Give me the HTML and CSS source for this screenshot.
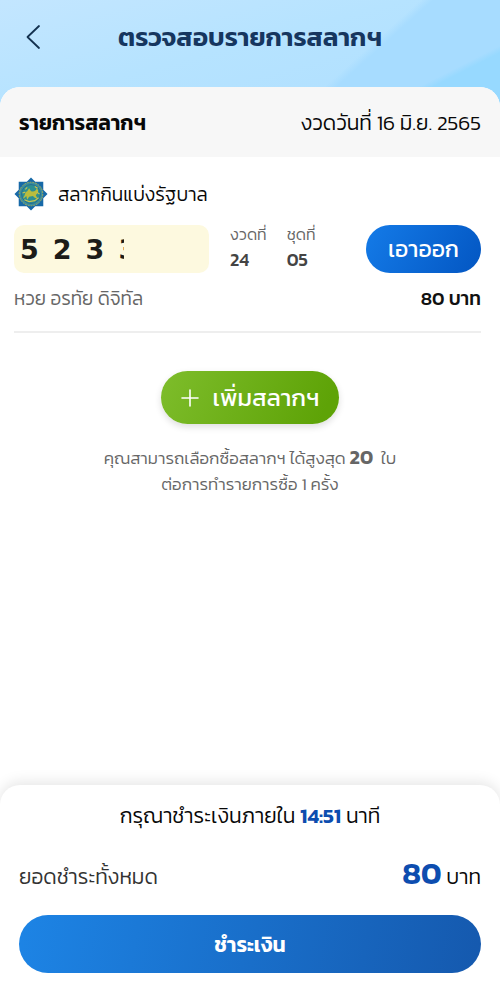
FILE: index.html
```html
<!DOCTYPE html>
<html lang="th">
<head>
<meta charset="utf-8">
<meta name="viewport" content="width=device-width, initial-scale=1">
<title>ตรวจสอบรายการสลากฯ</title>
<link rel="stylesheet" href="styles.css">
</head>
<body>
<div class="page">
  <header class="topbar">
    <button class="back" type="button" aria-label="ย้อนกลับ">
      <svg viewBox="0 0 16 26" width="16" height="26"><path d="M14 2 2.500 13 14 24" fill="none" stroke="currentColor" stroke-width="1.800" stroke-linecap="round" stroke-linejoin="round"/></svg>
    </button>
    <h1 class="title">ตรวจสอบรายการสลากฯ</h1>
  </header>
  <main class="sheet">
    <div class="sheet-head">
      <h2 class="sheet-title">รายการสลากฯ</h2>
      <span class="draw-date">งวดวันที่ 16 มิ.ย. 2565</span>
    </div>
    <article class="ticket">
      <div class="brand">
        <svg class="emblem" viewBox="0 0 36 36" width="34" height="34" aria-hidden="true">
          <path d="M18 .5 22.500 5H31v8.500l4.500 4.500-4.500 4.500V31h-8.500L18 35.500 13.500 31H5v-8.500L.5 18 5 13.500V5h8.500z" fill="#1769a8"/>
          <circle cx="18" cy="18" r="12.500" fill="#3d8f9b" stroke="#a9ab55" stroke-width="1" stroke-dasharray="2 1"/>
          <circle cx="18" cy="18" r="10" fill="#2c8f92" stroke="#236a94" stroke-width="1"/>
          <path d="M10 21c2-1 1-5 4-6l2-3 2 3c3 1 5 0 6-3 3 3 1 6-1 7l2 4-3-1-2-2-4 1-2 3-1-4-3 3z" fill="#b9bd3e"/>
          <path d="M12 13l2-2M22 10l3 2M11 24l5 2 6-1 4-3M9 17l3-1M24 16l3 2" fill="none" stroke="#c8c250" stroke-width="1.200"/>
        </svg>
        <span class="brand-name">สลากกินแบ่งรัฐบาล</span>
      </div>
      <div class="ticket-row">
        <div class="digits"><span>5</span><span>2</span><span>3</span><span class="cut">3</span></div>
        <dl class="facts">
          <div><dt>งวดที่</dt><dd>24</dd></div>
          <div><dt>ชุดที่</dt><dd>05</dd></div>
        </dl>
        <button class="remove" type="button">เอาออก</button>
      </div>
      <div class="seller"><span class="seller-name">หวย อรทัย ดิจิทัล</span><strong class="price">80 บาท</strong></div>
    </article>
    <div class="more">
      <button class="add" type="button">
        <svg viewBox="0 0 18 18" width="18" height="18" aria-hidden="true"><path d="M9 1v16M1 9h16" fill="none" stroke="currentColor" stroke-width="1.600" stroke-linecap="round"/></svg>
        <span>เพิ่มสลากฯ</span>
      </button>
      <p class="note">คุณสามารถเลือกซื้อสลากฯ ได้สูงสุด <strong>20</strong>&nbsp; ใบ<br>ต่อการทำรายการซื้อ 1 ครั้ง</p>
    </div>
  </main>
  <footer class="checkout">
    <p class="timer">กรุณาชำระเงินภายใน <strong>14:51</strong> นาที</p>
    <div class="total"><span class="total-label">ยอดชำระทั้งหมด</span><span class="amount"><strong>80</strong> บาท</span></div>
    <button class="pay" type="button">ชำระเงิน</button>
  </footer>
</div>
</body>
</html>
```
FILE: styles.css
```css
* { box-sizing: border-box; }
body, h1, h2, p, dl, dd { margin: 0; }
body, button { font-family: "Kanit", "Prompt", "Noto Sans Thai", "Noto Sans", sans-serif; font-weight: 300; }
strong { font-weight: 600; }
button { border: 0; padding: 0; cursor: pointer; }
body { background: #fff; color: #080808; }
.page { min-height: 100vh; display: flex; flex-direction: column; background: #fff; }
.topbar {
  display: grid;
  grid-template-columns: 44px 1fr 44px;
  align-items: center;
  height: 107px;
  padding: 0 11px 34px;
  background:
    linear-gradient(153deg, transparent 83%, #97d9ff 85%),
    linear-gradient(138deg, transparent 68%, #a7dcff 70%),
    linear-gradient(165deg, #c3e6ff 0%, #b6e3ff 45%, #afdfff 100%);
}
.back { display: flex; align-items: center; justify-content: center; height: 44px; background: none; color: #143250; }
.title { font-size: 26px; line-height: 36px; font-weight: 600; text-align: center; white-space: nowrap; color: #16365f; }
.sheet { margin-top: -20px; border-radius: 20px 20px 0 0; overflow: hidden; background: #fff; }
.sheet-head { display: flex; justify-content: space-between; align-items: center; height: 70px; padding: 0 19px; background: #f7f7f7; }
.sheet-title { font-size: 21px; font-weight: 600; }
.draw-date { font-size: 21px; }
.ticket { margin: 0 19px 0 14px; padding: 20px 0; border-bottom: 2px solid #eee; }
.brand { display: flex; align-items: center; gap: 10px; height: 34px; }
.emblem { flex: none; }
.brand-name { font-size: 19px; }
.ticket-row { display: flex; align-items: center; height: 48px; margin-top: 14px; }
.digits { display: flex; align-items: center; gap: 14px; flex: 0 1 195px; height: 48px; padding: 2px 6px 0; border-radius: 10px; background: #fdf9df; font: 700 27px/40px "DejaVu Sans", sans-serif; color: #1c1c18; }
.cut { width: 6px; overflow: hidden; }
.facts { display: flex; gap: 20px; margin-left: 21px; padding-bottom: 4px; white-space: nowrap; }
.facts dt { font-size: 16px; line-height: 26px; color: #666; }
.facts dd { font-size: 18px; line-height: 26px; font-weight: 500; color: #444; }
.remove { margin-left: auto; width: 115px; height: 48px; border-radius: 24px; background: linear-gradient(120deg, #147be8, #0356c2); color: #fff; font-size: 23px; font-weight: 400; }
.seller { display: flex; justify-content: space-between; align-items: center; height: 24px; margin-top: 14px; padding-bottom: 2px; }
.seller-name { font-size: 19px; color: #666; }
.price { font-size: 19px; font-weight: 500; color: #111; }
.more { display: flex; flex-direction: column; align-items: center; padding: 38px 20px; }
.add { display: flex; align-items: center; justify-content: center; gap: 14px; width: 178px; height: 53px; border-radius: 27px; background: linear-gradient(115deg, #7ebd2b, #5ea307 90%); color: #fff; font-size: 24px; font-weight: 400; box-shadow: 0 3px 7px #0002; white-space: nowrap; }
.note { margin-top: 21px; font-size: 17px; line-height: 26px; text-align: center; color: #666; }
.note strong { font-size: 20px; line-height: 20px; }
.checkout { margin-top: auto; padding: 14px 19px 30px; border-radius: 20px 20px 0 0; background: #fff; box-shadow: 0 -3px 14px #0000001a; }
.timer { font-size: 21px; line-height: 34px; text-align: center; }
.timer strong { color: #0d4daf; }
.total { display: flex; justify-content: space-between; align-items: baseline; height: 44px; margin-top: 18px; line-height: 44px; }
.total-label { font-size: 21px; color: #333; }
.amount { font-size: 21px; }
.amount strong { font-size: 31px; color: #0d4daf; }
.pay { display: block; width: 100%; height: 58px; margin-top: 20px; border-radius: 29px; background: linear-gradient(100deg, #1d84e5, #1559ae); color: #fff; font-size: 21px; font-weight: 600; }
```
